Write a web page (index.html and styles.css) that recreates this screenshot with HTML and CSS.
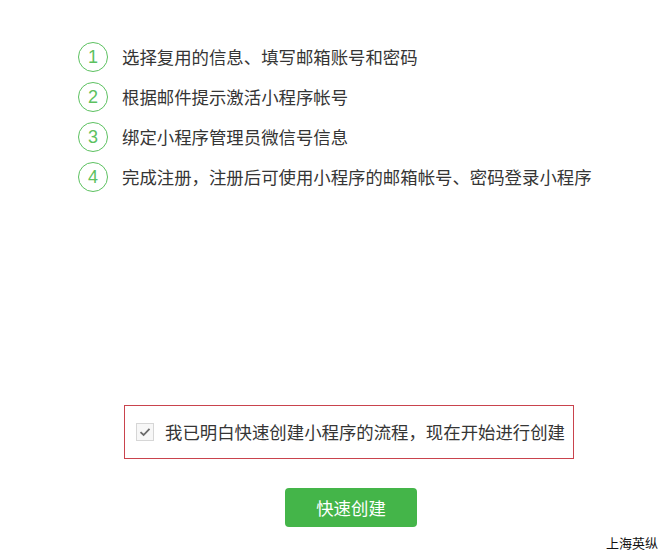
FILE: index.html
```html
<!DOCTYPE html>
<html lang="zh-CN">
<head>
<meta charset="utf-8">
<link rel="stylesheet" href="styles.css">
</head>
<body>
<div class="page">
  <ol class="steps">
    <li class="step"><span class="num">1</span><span class="txt">选择复用的信息、填写邮箱账号和密码</span></li>
    <li class="step"><span class="num">2</span><span class="txt">根据邮件提示激活小程序帐号</span></li>
    <li class="step"><span class="num">3</span><span class="txt">绑定小程序管理员微信号信息</span></li>
    <li class="step"><span class="num">4</span><span class="txt">完成注册，注册后可使用小程序的邮箱帐号、密码登录小程序</span></li>
  </ol>
  <label class="agree">
    <span class="check"><svg width="12" height="10" viewBox="0 0 12 10"><path d="M1.5 5.2 L4.6 8 L10.5 1.8" fill="none" stroke="#6b6b6b" stroke-width="1.8"/></svg></span>
    <span class="agree-text">我已明白快速创建小程序的流程，现在开始进行创建</span>
  </label>
  <button class="btn">快速创建</button>
  <div class="footer">上海英纵</div>
</div>
</body>
</html>
```

FILE: styles.css
```css
html, body {
  margin: 0;
  padding: 0;
  background: #fff;
}
body {
  font-family: "Noto Sans CJK SC", "Microsoft YaHei", sans-serif;
  color: #353535;
}
.page {
  width: 668px;
  height: 559px;
  display: flex;
  flex-direction: column;
  box-sizing: border-box;
  padding-top: 42px;
}
.steps {
  list-style: none;
  margin: 0;
  padding: 0 0 0 78px;
  display: flex;
  flex-direction: column;
  gap: 10px;
}
.step {
  display: flex;
  align-items: center;
  height: 30px;
}
.num {
  width: 30px;
  height: 30px;
  box-sizing: border-box;
  border: 1px solid #5cc160;
  border-radius: 50%;
  color: #5cc160;
  font-family: "Liberation Sans", Arial, sans-serif;
  font-size: 18px;
  display: flex;
  align-items: center;
  justify-content: center;
  line-height: 1;
}
.txt {
  margin-left: 14px;
  font-size: 17.4px;
  line-height: 30px;
}
.agree {
  margin: 213px 0 0 124px;
  width: 450px;
  height: 54px;
  box-sizing: border-box;
  border: 1px solid #c9434d;
  display: flex;
  align-items: center;
  padding-left: 11px;
}
.check {
  width: 18px;
  height: 18px;
  box-sizing: border-box;
  border: 1px solid #d6d6d6;
  background: #f7f7f7;
  display: flex;
  align-items: center;
  justify-content: center;
}
.agree-text {
  margin-left: 11px;
  font-size: 17.4px;
  line-height: 24px;
}
.btn {
  margin: 29px 0 0 285px;
  width: 132px;
  height: 39px;
  border: 0;
  border-radius: 4px;
  background: #44b549;
  color: #fff;
  font-family: "Noto Sans CJK SC", sans-serif;
  font-size: 17.4px;
  padding: 0;
}
.footer {
  margin-top: 8px;
  align-self: flex-end;
  margin-right: 10px;
  font-size: 13px;
  line-height: 16px;
  color: #111;
}
```
